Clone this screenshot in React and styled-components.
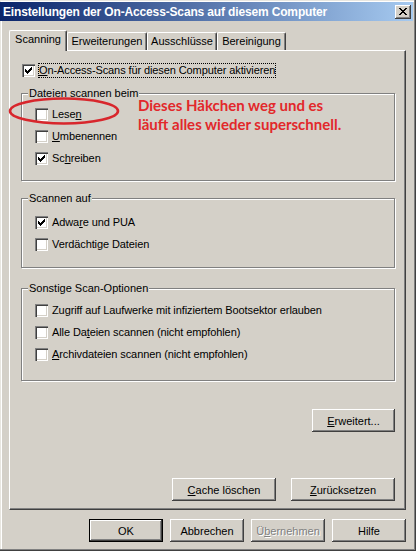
import React from "react";
import styled, { createGlobalStyle } from "styled-components";

const GlobalStyle = createGlobalStyle`
  html, body { margin: 0; padding: 0; background: #d4d0c8; }
  body { font-family: "Liberation Sans", Arial, sans-serif; font-size: 11px; color: #000; }
  * { box-sizing: border-box; }
`;

const Window = styled.div`
  position: relative;
  width: 416px;
  height: 551px;
  background: #d4d0c8;
  box-shadow: inset -1px -1px #404040, inset -2px -2px #808080, inset 1px 1px #e8e6e0, inset 2px 2px #fff;
  display: flex;
  flex-direction: column;
  overflow: hidden;
`;

const TitleBar = styled.div`
  height: 19px;
  margin: 2px 3px 0 0;
  padding-left: 3px;
  background: linear-gradient(to right, #0a246a, #a6caf0);
  display: flex;
  align-items: center;
  justify-content: space-between;
`;

const Title = styled.span`
  color: #fff;
  font-family: "Liberation Sans", Arial, sans-serif;
  font-weight: bold;
  font-size: 12px;
  letter-spacing: -0.15px;
  white-space: nowrap;
`;

const CloseButton = styled.div`
  width: 16px;
  height: 14px;
  margin-right: 2px;
  background: #d4d0c8;
  box-shadow: inset -1px -1px #404040, inset 1px 1px #fff, inset -2px -2px #808080;
  display: flex;
  align-items: center;
  justify-content: center;
`;

const Body = styled.div`
  padding: 8px 10px 0 9px;
  display: flex;
  flex-direction: column;
`;

const TabStrip = styled.div`
  display: flex;
  align-items: flex-end;
  height: 21px;
  position: relative;
  z-index: 1;
`;

const Tab = styled.div`
  width: ${(p) => p.$w}px;
  height: ${(p) => (p.$active ? 21 : 18)}px;
  margin-bottom: ${(p) => (p.$active ? -1 : 0)}px;
  padding-top: 2px;
  background: #d4d0c8;
  border-top: 1px solid #fff;
  border-left: 1px solid #fff;
  border-right: 1px solid #404040;
  border-radius: 2px 2px 0 0;
  box-shadow: inset -1px 0 #808080;
  text-align: center;
  line-height: 13px;
  white-space: nowrap;
`;

const Panel = styled.div`
  height: 460px;
  border: 1px solid;
  border-color: #fff #404040 #404040 #fff;
  box-shadow: inset -1px -1px #808080;
  padding: 11px 10px 0 11px;
  display: flex;
  flex-direction: column;
`;

const CheckRow = styled.label`
  display: flex;
  align-items: center;
  height: ${(p) => p.$h || 22}px;
  padding-left: ${(p) => p.$indent || 0}px;
  white-space: nowrap;
`;

const Box = styled.span`
  width: 13px;
  height: 13px;
  flex: none;
  background: #fff;
  box-shadow: inset 1px 1px #808080, inset 2px 2px #404040, inset -1px -1px #fff, inset -2px -2px #d4d0c8;
  display: flex;
  align-items: center;
  justify-content: center;
`;

const Label = styled.span`
  margin-left: ${(p) => (p.$focus ? 3 : 4)}px;
  border: ${(p) => (p.$focus ? "1px dotted #000" : "none")};
  line-height: 13px;
  letter-spacing: -0.1px;
`;

const U = styled.u`
  text-decoration: underline;
  text-underline-offset: 1px;
`;

const Group = styled.fieldset`
  margin: ${(p) => p.$mt}px 0 0 0;
  padding: 0;
  border: 1px solid #808080;
  box-shadow: inset 1px 1px #fff, 1px 1px #fff;
  min-inline-size: 0;
`;

const GroupBody = styled.div`
  padding: ${(p) => p.$pt}px 0 ${(p) => p.$pb}px 13px;
`;

const Legend = styled.legend`
  margin-left: 6px;
  padding: 0 1px;
  line-height: 13px;
  background: #d4d0c8;
  position: relative;
`;

const ButtonRow = styled.div`
  display: flex;
  justify-content: flex-end;
  gap: ${(p) => p.$gap || 7}px;
  margin-top: ${(p) => p.$mt}px;
`;

const Button = styled.button`
  width: ${(p) => p.$w || 74}px;
  height: 23px;
  padding: 0;
  border: none;
  background: #d4d0c8;
  font-family: "Liberation Sans", Arial, sans-serif;
  font-size: 11px;
  color: ${(p) => (p.disabled ? "#808080" : "#000")};
  text-shadow: ${(p) => (p.disabled ? "1px 1px #fff" : "none")};
  box-shadow: ${(p) =>
    p.$default
      ? "inset 0 0 0 1px #000, inset -2px -2px #404040, inset 2px 2px #fff, inset -3px -3px #808080"
      : "inset -1px -1px #404040, inset 1px 1px #fff, inset -2px -2px #808080"};
`;

const Annotation = styled.div`
  position: absolute;
  left: 138px;
  top: 96px;
  color: #e2282b;
  font-family: Lato, "Open Sans", sans-serif;
  font-weight: bold;
  font-size: 15px;
  line-height: 19px;
  white-space: nowrap;
`;

const Ellipse = styled.svg`
  position: absolute;
  left: 8px;
  top: 96px;
`;

const CheckMark = () => (
  <svg width="7" height="7" viewBox="0 0 7 7" shapeRendering="crispEdges">
    <rect x="6" y="0" width="1" height="1" />
    <rect x="5" y="1" width="2" height="1" />
    <rect x="0" y="2" width="1" height="1" />
    <rect x="4" y="2" width="3" height="1" />
    <rect x="0" y="3" width="2" height="1" />
    <rect x="3" y="3" width="3" height="1" />
    <rect x="0" y="4" width="5" height="1" />
    <rect x="1" y="5" width="3" height="1" />
    <rect x="2" y="6" width="1" height="1" />
  </svg>
);

const CloseGlyph = () => (
  <svg width="8" height="7" viewBox="0 0 8 7" shapeRendering="crispEdges">
    <rect x="0" y="0" width="2" height="1" />
    <rect x="6" y="0" width="2" height="1" />
    <rect x="1" y="1" width="2" height="1" />
    <rect x="5" y="1" width="2" height="1" />
    <rect x="2" y="2" width="4" height="1" />
    <rect x="3" y="3" width="2" height="1" />
    <rect x="2" y="4" width="4" height="1" />
    <rect x="1" y="5" width="2" height="1" />
    <rect x="5" y="5" width="2" height="1" />
    <rect x="0" y="6" width="2" height="1" />
    <rect x="6" y="6" width="2" height="1" />
  </svg>
);

const Check = ({ checked, children, focus, h, indent }) => (
  <CheckRow $h={h} $indent={indent}>
    <Box>{checked && <CheckMark />}</Box>
    <Label $focus={focus}>{children}</Label>
  </CheckRow>
);

export default function App() {
  return (
    <>
      <GlobalStyle />
      <Window>
        <TitleBar>
          <Title>Einstellungen der On-Access-Scans auf diesem Computer</Title>
          <CloseButton>
            <CloseGlyph />
          </CloseButton>
        </TitleBar>
        <Body>
          <TabStrip>
            <Tab $w={58} $active>Scanning</Tab>
            <Tab $w={80}>Erweiterungen</Tab>
            <Tab $w={70}>Ausschlüsse</Tab>
            <Tab $w={69}>Bereinigung</Tab>
          </TabStrip>
          <Panel>
            <Check checked focus h={16} indent={1}>
              <U>O</U>n-Access-Scans für diesen Computer aktivieren
            </Check>
            <Group $mt={9}>
              <Legend>Dateien scannen beim</Legend>
              <GroupBody $pt={3} $pb={11}>
                <Check>
                  Lese<U>n</U>
                </Check>
                <Check>
                  <U>U</U>mbenennen
                </Check>
                <Check checked>
                  Sc<U>h</U>reiben
                </Check>
              </GroupBody>
            </Group>
            <Group $mt={11}>
              <Legend>Scannen auf</Legend>
              <GroupBody $pt={6} $pb={12}>
                <Check checked>
                  Adwa<U>r</U>e und PUA
                </Check>
                <Check>Verdächtige Dateien</Check>
              </GroupBody>
            </Group>
            <Group $mt={14}>
              <Legend>Sonstige Scan-Optionen</Legend>
              <GroupBody $pt={4} $pb={15}>
                <Check>
                  Zu<U>g</U>riff auf Laufwerke mit infiziertem Bootsektor erlauben
                </Check>
                <Check>
                  Alle Da<U>t</U>eien scannen (nicht empfohlen)
                </Check>
                <Check>
                  <U>A</U>rchivdateien scannen (nicht empfohlen)
                </Check>
              </GroupBody>
            </Group>
            <ButtonRow $mt={28}>
              <Button $w={83}>
                <U>E</U>rweitert...
              </Button>
            </ButtonRow>
            <ButtonRow $mt={46} $gap={15}>
              <Button $w={104}>
                <U>C</U>ache löschen
              </Button>
              <Button $w={104}>
                <U>Z</U>urücksetzen
              </Button>
            </ButtonRow>
          </Panel>
          <ButtonRow $mt={9}>
            <Button $default>OK</Button>
            <Button>Abbrechen</Button>
            <Button disabled>
              Ü<U>b</U>ernehmen
            </Button>
            <Button>Hilfe</Button>
          </ButtonRow>
        </Body>
        <Ellipse width="116" height="32" viewBox="0 0 116 32">
          <ellipse cx="56" cy="15" rx="54" ry="12.5" fill="none" stroke="#d8262c" strokeWidth="2.6" />
        </Ellipse>
        <Annotation>
          Dieses Häkchen weg und es
          <br />
          läuft alles wieder superschnell.
        </Annotation>
      </Window>
    </>
  );
}
